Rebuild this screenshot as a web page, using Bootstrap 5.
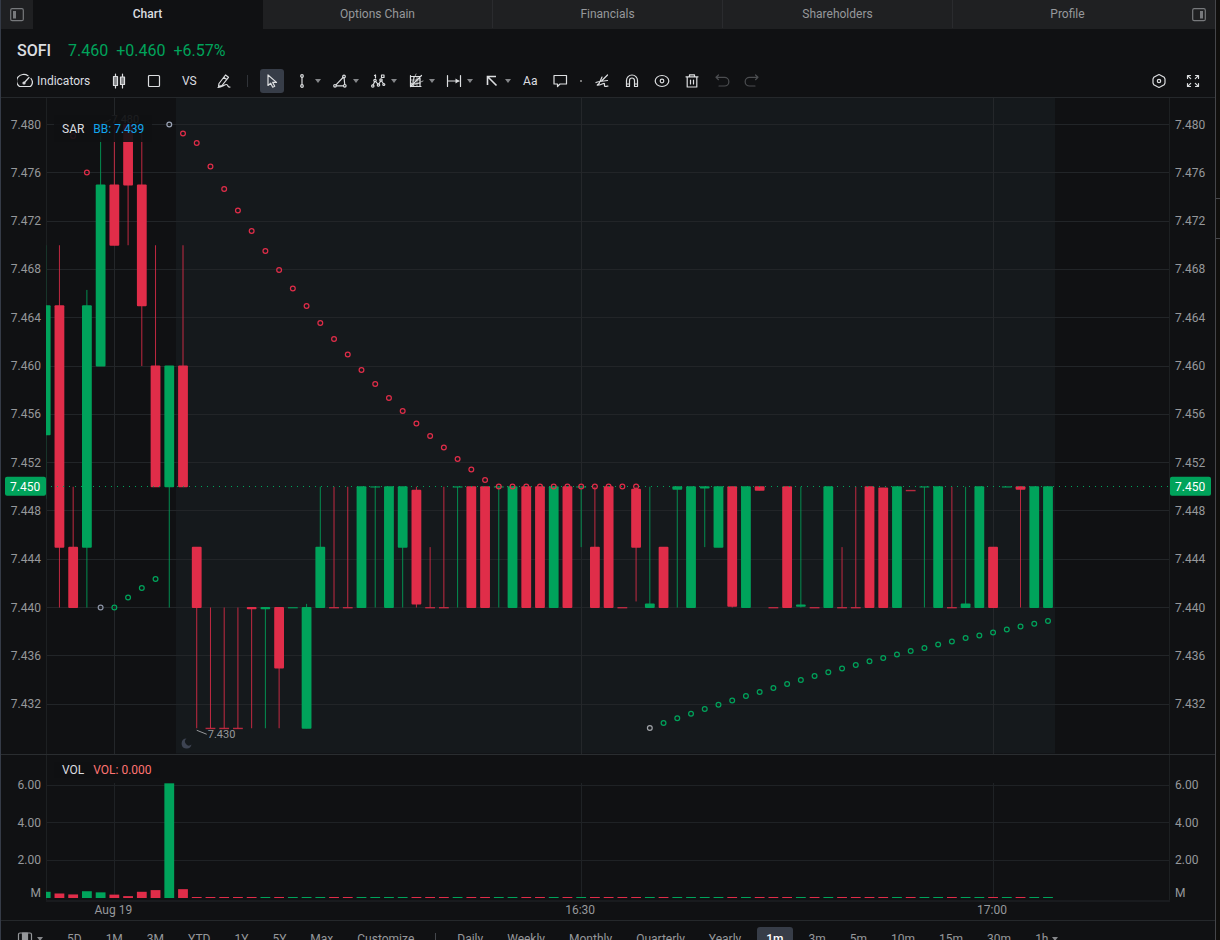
<!DOCTYPE html>
<html lang="en" data-bs-theme="dark">
<head>
<meta charset="utf-8">
<meta name="viewport" content="width=device-width, initial-scale=1">
<title>SOFI Chart</title>
<link href="https://cdn.jsdelivr.net/npm/bootstrap@5.3.0/dist/css/bootstrap.min.css" rel="stylesheet">
<style>
  :root { --ink:#101113; --line:#25282b; --edge:#353b47; --up:#00a35b; --down:#e02d49; --dim:#96989b; --lit:#dcdee0; --sel:#373d48; }
  body { font-family: Roboto, sans-serif; font-size: 12px; line-height: 16px; background: var(--ink); color: var(--lit); }
  button { font: inherit; color: inherit; background: none; border: 0; padding: 0; }
  svg { display: block; }
  .frame { height: calc(100vh + 17px); }
  .desk { border-left: 1px solid var(--edge); border-right: 1px solid #45464a; min-width: 0; }
  .gutter { width: 4px; background: #100f0d; }
  .gutter-gap { height: 198px; }
  .gutter-cell { height: 41px; border: solid #45464a; border-width: 1px 0; }
  .tabs-row { height: 29px; background: #1f2022; color: var(--dim); }
  .tabs-row .side { width: 32px; color: #77797c; }
  .tab-link { flex: 1 1 0; line-height: 28px; color: var(--dim); text-decoration: none; text-align: center; border-right: 1px solid #2a2b2e; margin-bottom: 1px; }
  .tab-link.on { background: var(--ink); color: var(--lit); font-weight: 500; border-color: var(--ink); margin-bottom: 0; }
  .tab-link:last-of-type { border-color: #1f2022; }
  .quote { height: 36px; padding: 11px 16px 0; font-size: 16px; line-height: 22px; font-weight: 500; gap: 17px; }
  .quote .gain { color: var(--up); font-weight: 400; }
  .tools { height: 33px; padding: 0 10px 0 16px; border-bottom: 1px solid var(--line); }
  .set-a { gap: 11px; }
  .set-b { gap: 6px; }
  .set-c { gap: 10px; }
  .ind { margin-right: 6px; gap: 4px; }
  .tool { width: 24px; height: 24px; display: flex; align-items: center; justify-content: center; border-radius: 3px; }
  .tool.on { background: var(--sel); }
  .tool.off { color: #4b4d50; }
  .drop { width: 8px; height: 24px; display: flex; align-items: center; justify-content: center; }
  .caret { width: 0; height: 0; border: solid transparent; border-width: 4px 3px 0; border-top-color: #85878a; }
  .rule { width: 1px; height: 12px; background: #303338; margin: 0 12px 0 11px; }
  .dot { width: 6px; }
  .dot::after { content: ""; display: block; width: 2px; height: 2px; margin: auto; background: #777; }
  .ic { fill: none; stroke: currentColor; stroke-width: 1.2; stroke-linecap: round; stroke-linejoin: round; }
  .stage { min-height: 0; }
  .stage svg { width: 100%; height: 100%; }
  .stage text { fill: var(--dim); font-size: 12px; }
  .stage .tag { fill: #fff; }
  .stage .note { font-size: 11px; }
  .key { left: 53px; padding: 6px 8px 5px; gap: 9px; background: rgba(16,17,19,.9); }
  .key-main { top: 17px; }
  .key-vol { top: 80%; margin-top: 6px; }
  .ranges { height: 37px; border-top: 1px solid var(--line); padding-left: 16px; color: var(--dim); gap: 8px; }
  .ranges button { height: 24px; padding: 0 8px; border-radius: 3px; }
  .ranges button.on { background: var(--sel); color: #fff; font-weight: 500; padding: 0 9px; }
  .ranges .first { padding: 0; width: 34px; }
  .ranges .rule { margin: 0 5px; background: #44474c; }
</style>
</head>
<body class="overflow-hidden">
<div class="frame d-flex">
  <main class="desk d-flex flex-column flex-fill">
    <nav class="tabs-row d-flex" aria-label="Views">
      <button class="side d-flex justify-content-center pt-1" aria-label="Left panel">
        <svg class="mt-1 ic" width="14" height="14" viewBox="0 0 14 14"><rect x=".7" y=".7" width="12.6" height="12" rx="1.5"/><path d="M3 3h3v7.500H3z" fill="currentColor" stroke="none"/></svg>
      </button>
      <a class="tab-link on" href="#">Chart</a>
      <a class="tab-link" href="#">Options Chain</a>
      <a class="tab-link" href="#">Financials</a>
      <a class="tab-link" href="#">Shareholders</a>
      <a class="tab-link" href="#">Profile</a>
      <button class="side d-flex justify-content-center pt-1" aria-label="Right panel">
        <svg class="mt-1 ic" width="14" height="14" viewBox="0 0 14 14"><rect x=".7" y=".7" width="12.6" height="12" rx="1.5"/><path d="M8 3h3v7.500H8z" fill="currentColor" stroke="none"/></svg>
      </button>
    </nav>
    <div class="quote d-flex">
      <span>SOFI</span>
      <span class="gain d-flex gap-2"><span>7.460</span><span>+0.460</span><span>+6.57%</span></span>
    </div>
    <div class="tools d-flex align-items-center">
      <div class="set-a d-flex align-items-center">
        <button class="ind d-flex align-items-center">
          <svg class="ic" width="16" height="16" viewBox="0 0 16 16"><path d="M11 2.700A7 6.500 0 0 0 2.500 13.500h11A7 6.500 0 0 0 14 5.500M7 10l5-5.500"/><circle cx="7" cy="10" r="1"/></svg>
          <span>Indicators</span>
        </button>
        <button class="tool" aria-label="Candles"><svg class="ic" width="16" height="16" viewBox="0 0 16 16"><path d="M4.500 1v14M11.500 1v14"/><path d="M2.500 3.500h4v9h-4zM9.500 4h4v7.500h-4z" fill="#85878a"/></svg></button>
        <button class="tool" aria-label="Layout"><svg class="ic" width="16" height="16" viewBox="0 0 16 16"><rect x="2.500" y="2.500" width="11" height="11" rx="1"/></svg></button>
        <button class="tool">VS</button>
        <button class="tool" aria-label="Draw"><svg class="ic" width="16" height="16" viewBox="0 0 16 16"><path d="M3 10.500 9.500 2l3 2.300L6 12.500l-3.500.8zM7.700 4.300l3 2.300M2 14.500c4-.5 6.500-3 8.500-3s.5 3 3.500 2.500"/></svg></button>
      </div>
      <span class="rule"></span>
      <div class="set-b d-flex align-items-center">
        <button class="tool on" aria-label="Pointer"><svg class="ic" width="16" height="16" viewBox="0 0 16 16"><path d="M4 2v10.500l2.700-2.300 2 4 2-1-2-3.800h3.800z"/></svg></button>
        <div class="d-flex"><button class="tool" aria-label="Line"><svg class="ic" width="16" height="16" viewBox="0 0 16 16"><circle cx="8" cy="3" r="1.300"/><circle cx="8" cy="13" r="1.300"/><path d="M8 4.500v7"/></svg></button><button class="drop" aria-label="More lines"><i class="caret"></i></button></div>
        <div class="d-flex"><button class="tool" aria-label="Shape"><svg class="ic" width="16" height="16" viewBox="0 0 16 16"><circle cx="12" cy="3.500" r="1.300"/><circle cx="3" cy="12.800" r="1.300"/><circle cx="12.800" cy="12.800" r="1.300"/><path d="M11 4.500 4 11.800M4.500 12.800H11.300M12.100 5l.6 6.300"/></svg></button><button class="drop" aria-label="More shapes"><i class="caret"></i></button></div>
        <div class="d-flex"><button class="tool" aria-label="Waves"><svg class="ic" stroke-width="1" width="16" height="16" viewBox="0 0 16 16"><circle cx="2.800" cy="13" r="1.200"/><circle cx="5" cy="7.500" r="1.200"/><circle cx="8.500" cy="12" r="1.200"/><circle cx="11" cy="7" r="1.200"/><circle cx="13.800" cy="11.500" r="1"/><path d="m3.200 11.700 1.400-3M5.700 8.600l2.100 2.300M9 10.800l1.500-2.600M11.600 8l1.700 2.500M4.500 2.500l1-.5v3M11.500 2H14v2.500h-2.500z"/></svg></button><button class="drop" aria-label="More waves"><i class="caret"></i></button></div>
        <div class="d-flex"><button class="tool" aria-label="Gann"><svg class="ic" width="16" height="16" viewBox="0 0 16 16"><path d="M2.500 2.500v11H13M2.500 3.500h9.500v10M2.500 13.500 13.500 2.500"/><path style="stroke-width:.7" d="M2.500 7H12M2.500 10.500H12M5.500 3.500v10M9 3.500v10M2.500 13.500 15 8M2.500 13.500 8 1"/></svg></button><button class="drop" aria-label="More grids"><i class="caret"></i></button></div>
        <div class="d-flex"><button class="tool" aria-label="Measure"><svg class="ic" width="16" height="16" viewBox="0 0 16 16"><path d="M1.500 2.500v11M14.500 2.500v11M2 8h11"/><path d="m9.500 5.500 4 2.500-4 2.500z" fill="currentColor" stroke="none"/></svg></button><button class="drop" aria-label="More measures"><i class="caret"></i></button></div>
        <div class="d-flex"><button class="tool" aria-label="Arrow"><svg class="ic" width="16" height="16" viewBox="0 0 16 16"><path style="stroke-width:1.600;stroke-linecap:butt;stroke-linejoin:miter" d="M3.500 12V3.500H12M3.500 3.500l9 9"/></svg></button><button class="drop" aria-label="More arrows"><i class="caret"></i></button></div>
        <button class="tool">Aa</button>
        <button class="tool" aria-label="Comment"><svg class="ic" width="16" height="16" viewBox="0 0 16 16"><path d="M2 2.500h12.500v8.500H8l-2.500 2.500V11H2z"/></svg></button>
        <span class="dot"></span>
        <button class="tool" aria-label="Brush"><svg class="ic" width="16" height="16" viewBox="0 0 16 16"><path d="M13.500 2 8 7.500M8 4 6 8.500l7.500-1M2 9.500C5 8 6.500 9 5 10.500s-3 2 0 1.500 6-3 5.500-.5 1 2 3.500 1.500"/></svg></button>
        <button class="tool" aria-label="Magnet"><svg class="ic" width="16" height="16" viewBox="0 0 16 16"><path d="M2.500 13.500V7.500a5.500 5.500 0 0 1 11 0v6h-3v-6a2.500 2.500 0 0 0-5 0v6zM2.500 11h3M10.500 11h3"/></svg></button>
        <button class="tool" aria-label="Show"><svg class="ic" width="16" height="16" viewBox="0 0 16 16"><ellipse cx="8" cy="8" rx="6.800" ry="5.500"/><circle cx="8" cy="8" r="1.800"/></svg></button>
        <button class="tool" aria-label="Delete"><svg class="ic" width="16" height="16" viewBox="0 0 16 16"><path d="M2 3.800h12M5.500 3.500V1.800h5v1.700M3.200 4v10h9.600V4M6.500 7v4M9.500 7v4"/></svg></button>
        <button class="tool off" aria-label="Undo"><svg class="ic" width="16" height="16" viewBox="0 0 16 16"><path d="M4.500 2 2 4.300l2.500 2.400M2 4.300h8.500a4.300 4.300 0 0 1 0 8.700H5"/></svg></button>
        <button class="tool off" aria-label="Redo"><svg class="ic" width="16" height="16" viewBox="0 0 16 16"><path d="M11.500 2 14 4.300l-2.500 2.400M14 4.300H5.500a4.300 4.300 0 0 0 0 8.700H11"/></svg></button>
      </div>
      <div class="set-c ms-auto d-flex">
        <button class="tool" aria-label="Settings"><svg class="ic" width="16" height="16" viewBox="0 0 16 16"><path d="M6.500 2.200 8 1.500l1.500.7 3.700 2.100.8 1.700v4l-.8 1.700-3.700 2.100-1.500.7-1.500-.7-3.700-2.100L2 10V6l.8-1.700z"/><circle cx="8" cy="8" r="1.700"/></svg></button>
        <button class="tool" aria-label="Full screen"><svg class="ic" width="16" height="16" viewBox="0 0 16 16"><path d="M2.500 5.500v-3h3M2.700 2.700l3 3M10.500 2.500h3v3M13.300 2.700l-3 3M2.500 10.500v3h3M2.700 13.300l3-3M10.500 13.500h3v-3M13.300 13.300l-3-3"/></svg></button>
      </div>
    </div>
    <section class="stage position-relative flex-fill">
      <svg id="plot" role="img" aria-label="SOFI one minute candles with volume"></svg>
      <div class="key key-main position-absolute d-flex"><span>SAR</span><span style="color:#12a5ec">BB: 7.439</span></div>
      <div class="key key-vol position-absolute d-flex py-0"><span>VOL</span><span style="color:#ff7472">VOL: 0.000</span></div>
    </section>
    <div class="ranges d-flex align-items-center flex-shrink-0">
      <button class="first d-flex align-items-center gap-1" aria-label="Panels"><svg class="ic" width="16" height="16" viewBox="0 0 16 16"><rect x="1.500" y="2" width="13" height="12" rx="1.500"/><path d="M5.500 2h5v12h-5z" fill="currentColor"/></svg><i class="caret"></i></button>
      <button>5D</button><button>1M</button><button>3M</button><button>YTD</button><button>1Y</button><button>5Y</button><button>Max</button><button>Customize</button>
      <span class="rule"></span>
      <button>Daily</button><button>Weekly</button><button>Monthly</button><button>Quarterly</button><button>Yearly</button><button class="on">1m</button><button>3m</button><button>5m</button><button>10m</button><button>15m</button><button>30m</button><button class="d-flex align-items-center gap-1">1h <i class="caret"></i></button>
    </div>
  </main>
  <aside class="gutter"><div class="gutter-gap"></div><div class="gutter-cell"></div></aside>
</div>
<script src="https://cdn.jsdelivr.net/npm/bootstrap@5.3.0/dist/js/bootstrap.bundle.min.js"></script>
<script>
// Each candle: direction, high, body top, body bottom, low (thousandths above 7.400)
const candles = `g 70 65 54.3 49|r 70 65 45 40|r 50 45 40 40|g 66.3 65 45 40|g 80 75 60 60|r 80 75 70 70|r 80 80 75 70|r 80 75 65 60|r 70 60 50 50|g 60 60 50 40|r 70 60 50 50
r 45 45 40 30|r 40 30 30 30|r 40 30 30 30|r 40 30 30 30|r 40 40 39.9 30|g 40 40 39.9 30|r 40 40 35 30|g 40 40 40 40|g 40.3 40 30 30|g 50 45 40 40|r 50 40 40 40|r 50 40 40 40
g 50 50 40 40|g 50 50 50 40|g 50 50 40 40|g 50 50 45 40|r 50 49.7 40.3 40|r 45 40 40 40|r 50 40 40 40|g 50 50 50 40|r 50 50 40 40|r 50 50 40 40|g 50 50 50 40|g 50 50 40 40
r 50 50 40 40|r 50 50 40 40|g 50 50 40 40|r 50 50 40 40|g 50 50 50 45|r 50 45 40 40|r 50 50 40 40|r 40 40 40 40|r 50 49.8 45 40.5|g 50 40.3 40 40|r 45 45 40 40
g 50 50 49.8 40|g 50 50 40 40|g 50 50 49.9 45|g 50 50 45 45|r 50 50 40.1 40|g 50 50 40 40|r 50 50 49.7 49.7|r 40 40 40 40|r 50 50 40 40|g 50 40.2 40.1 40|r 40 40 40 40
g 50 50 40 40|r 45 40 40 40|r 50 40 40 40|r 50 50 40 40|r 49.9 49.9 40 40|g 50 50 40 40|r 49.7 49.7 49.7 49.7|g 50 50 50 40|g 50 50 40 40|r 50 40 40 40|g 50 40.3 40 40
g 50 50 40 40|r 45 45 40 40|g 50 50 50 50|r 50 50 49.8 40|g 50 50 40 40|g 50 50 40 40`.split(/[|\n]/).map(r => r.split(' ').map((v, i) => i ? +v : v));
const volume = [.33, .24, .19, .36, .3, .18, .1, .33, .42, 6.1, .47];
const price = y => 80 - (y - 26.5) / 12.075;
// Parabolic SAR runs: first index, colour, heights on the 822 unit canvas
const sar = [
  [2, '#e02d49', [38]], [3, '#e02d49', [74.5]], [4, '#8b93a5', [509.5]], [5, '#00a35b', [509.5, 499.5, 490, 481]], [9, '#9aa3b5', [26.5]],
  [10, '#e02d49', [35.5,45,68.5,91,112.5,133,153,172,190.5,208,225,241,256.5,272,286,300,313,325.5,338,349.5,361,371.5,382,388.5,388.5,388.5,388.5,388.5,388.5,388.5,388.5,388.5,388.5,388.5]],
  [44, '#a0a3a8', [630]],
  [45, '#00a35b', [625,620.3,615.7,611,606.8,602.5,598,594,590,586,582,578,574.3,570.5,567,563.3,560,556.5,553,550,546.5,543.5,540,537.5,534.5,531.5,528.5,525.7,523]]
];
const plot = document.getElementById('plot');
function draw() {
  const W = plot.clientWidth, H = plot.clientHeight, kx = W / 1214, ky = H / 822;
  const X = i => (44.7 + i * 13.73) * kx;
  const P = p => (26.5 + (80 - p) * 12.075) * ky;
  const V = v => (800 - v * 18.8) * ky;
  const R = n => Math.floor(n) + .5;
  const L = 45, E = W - 45;
  let s = '';
  const line = (a, b, c, d, k, x = '') => s += `<line x1="${a}" y1="${b}" x2="${c}" y2="${d}" stroke="${k}" ${x}/>`;
  const rect = (x, y, w, h, k, e = '') => s += `<rect x="${x}" y="${y}" width="${w}" height="${h}" fill="${k}" ${e}/>`;
  const text = (x, y, t, e = '') => s += `<text x="${x}" y="${y}" ${e}>${t}</text>`;
  const split = R(656 * ky);
  rect(175 * kx, 0, 879 * kx, split - 1, '#15191c');
  for (let p = 80; p >= 32; p -= 4) {
    line(L, R(P(p)), E, R(P(p)), '#222528');
    text(40, P(p) + 4, (7.4 + p / 1000).toFixed(3), 'text-anchor="end"');
    text(E + 5, P(p) + 4, (7.4 + p / 1000).toFixed(3));
  }
  for (const v of [6, 4, 2]) {
    line(L, R(V(v)), E, R(V(v)), '#1f2225');
    text(40, V(v) + 4, v.toFixed(2), 'text-anchor="end"');
    text(E + 5, V(v) + 4, v.toFixed(2));
  }
  text(40, 799 * ky, 'M', 'text-anchor="end"');
  text(E + 5, 799 * ky, 'M');
  for (const [i, t] of [[5, 'Aug 19'], [39, '16:30'], [69, '17:00']]) {
    line(R(X(i)), 0, R(X(i)), split, '#24272a');
    line(R(X(i)), 685 * ky, R(X(i)), 800 * ky, '#1f2225');
    text(X(i) - 1, 816 * ky, t, 'text-anchor="middle"');
  }
  line(L + .5, 0, L + .5, 802 * ky, '#1d2022');
  line(E - .5, 0, E - .5, 802 * ky, '#1d2022');
  line(L, 803 * ky, E, 803 * ky, '#191b1e', 'stroke-width="2"');
  line(0, split, W, split, '#2a2d30');
  s += `<clipPath id="area"><rect x="${L}" y="0" width="${E - L}" height="${H}"/></clipPath><g clip-path="url(#area)">`;
  candles.forEach(([d, hi, t, b, lo], i) => {
    const k = d === 'g' ? '#00a35b' : '#e02d49', x = X(i), w = 9.800 * kx;
    if (hi > lo) line(x, P(hi), x, P(lo), k, 'stroke-opacity=".85"');
    rect(x - w / 2, P(t) - .5, w, Math.max(1.400, P(b) - P(t) + 1), k, t === b ? 'opacity=".8"' : 'rx="1"');
    const h = i < volume.length ? V(0) - V(volume[i]) : 1;
    rect(x - w / 2, Math.round(V(0)) - h, w, h, k);
  });
  line(L + 5, R(P(50)), E, R(P(50)), '#00a35b', 'stroke-dasharray="1 5"');
  for (const [from, k, ys] of sar) ys.forEach((y, j) => s += `<circle cx="${X(from + j)}" cy="${P(price(y))}" r="2.400" fill="none" stroke="${k}" stroke-width="1.200"/>`);
  s += '</g>';
  for (const x of [4, E]) {
    rect(x, P(50) - 10, 41, 19, '#00a35b', 'rx="2"');
    text(x + 5, P(50) + 4, '7.450', 'class="tag"');
  }
  line(X(11), P(30) + 2, X(11) + 10, P(30) + 6, '#96989b');
  text(X(11) + 11, P(30) + 10, '7.430', 'class="note"');
  line(X(4), P(80), X(4) + 10, P(80) - 5, '#96989b');
  text(X(4) + 11, P(80) - 2, '7.480', 'class="note"');
  const mx = X(10) + 3.500, my = 645.500 * ky;
  s += `<path d="M${mx} ${my - 5}a5 5 0 1 0 5 6a3.500 3.500 0 0 1 -5 -6z" fill="#3d4351"/>`;
  plot.innerHTML = s;
}
draw();
addEventListener('resize', draw);
</script>
</body>
</html>
